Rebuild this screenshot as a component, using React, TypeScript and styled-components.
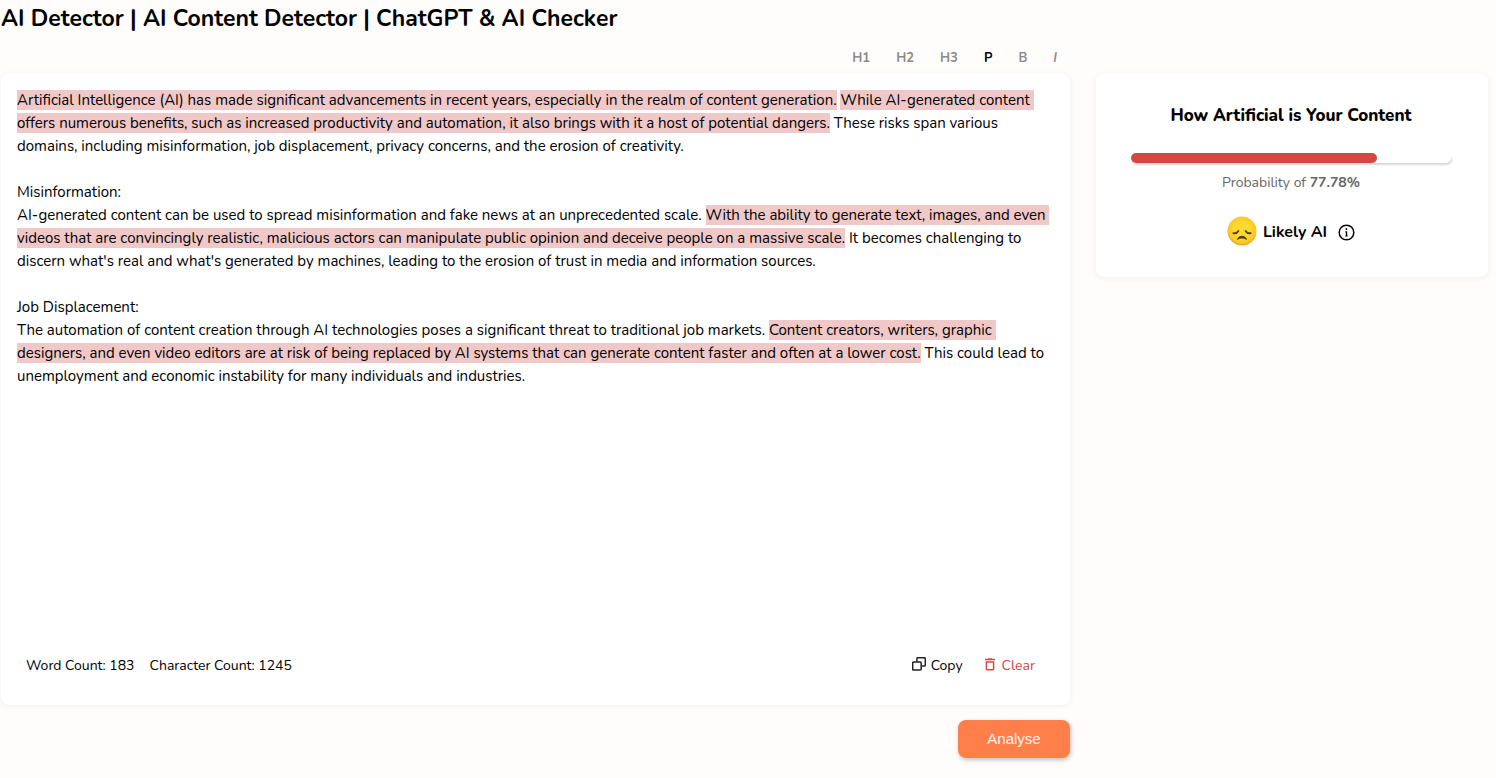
import React, { useState } from "react";
import styled, { createGlobalStyle } from "styled-components";

const GlobalStyle = createGlobalStyle`
  *, *::before, *::after { box-sizing: border-box; }
  body {
    margin: 0;
    background: #fefdfb;
    color: #000;
    font-family: Nunito, Lato, "Liberation Sans", sans-serif;
  }
  button { font: inherit; border: 0; background: none; padding: 0; cursor: pointer; }
`;

const Page = styled.div`
  padding: 0 8px 20px 1px;
`;

const Title = styled.h1`
  margin: 0;
  font-size: 23px;
  line-height: 38px;
  font-weight: 700;
`;

const Columns = styled.main`
  display: grid;
  grid-template-columns: minmax(0, 1fr) 392px;
  column-gap: 26px;
  align-items: start;
`;

const Toolbar = styled.div`
  display: flex;
  justify-content: flex-end;
  gap: 26px;
  height: 36px;
  padding: 9px 13px 0 0;
`;

const Format = styled.button<{ $active?: boolean; $italic?: boolean }>`
  height: 22px;
  font-size: 13px;
  line-height: 22px;
  font-weight: 700;
  font-style: ${(p) => (p.$italic ? "italic" : "normal")};
  color: ${(p) => (p.$active ? "#000" : "#8b8b8b")};
`;

const Card = styled.section`
  background: #fff;
  border-radius: 8px;
  box-shadow: 0 1px 6px rgba(0, 0, 0, 0.06);
`;

const EditorCard = styled(Card)`
  display: flex;
  flex-direction: column;
  padding: 15px 16px 19px;
`;

const Editor = styled.div`
  min-height: 556px;
  outline: none;
  font-size: 15px;
  line-height: 23px;
  white-space: pre-wrap;
`;

const Mark = styled.mark`
  background: #f1c8c8;
  color: inherit;
`;

const EditorFooter = styled.footer`
  display: flex;
  align-items: center;
  gap: 15px;
  height: 41px;
  padding: 0 19px 0 9px;
  font-size: 14px;
  line-height: 20px;
`;

const Actions = styled.div`
  display: flex;
  gap: 21px;
  margin-left: auto;
`;

const Action = styled.button<{ $danger?: boolean }>`
  display: flex;
  align-items: center;
  gap: ${(p) => (p.$danger ? 6 : 5)}px;
  color: ${(p) => (p.$danger ? "#d04a46" : "#000")};
`;

const SubmitRow = styled.div`
  display: flex;
  justify-content: flex-end;
  margin-top: 15px;
`;

const Submit = styled.button`
  width: 112px;
  height: 38px;
  padding-bottom: 2px;
  border-radius: 8px;
  background: #ff7f4a;
  box-shadow: 1px 2px 4px rgba(0, 0, 0, 0.25);
  color: #fff4ee;
  font-family: "Liberation Sans", sans-serif;
  font-size: 15px;
`;

const ResultCard = styled(Card)`
  display: flex;
  flex-direction: column;
  align-items: center;
  margin-top: 36px;
  padding: 28px 37px 29px 35px;
`;

const ResultTitle = styled.h2`
  margin: 0;
  font-size: 17px;
  line-height: 28px;
  font-weight: 800;
`;

const Track = styled.div`
  width: 100%;
  height: 10px;
  margin-top: 23px;
  border-radius: 5px;
  box-shadow: 1px 2px 2px rgba(0, 0, 0, 0.16);
`;

const Fill = styled.div`
  height: 100%;
  border-radius: 5px;
  background: #d04a43;
`;

const Probability = styled.p`
  margin: 10px 0 0;
  font-size: 14px;
  line-height: 20px;
  color: #666;
`;

const Verdict = styled.div`
  display: flex;
  align-items: center;
  height: 32px;
  margin-top: 23px;
  font-size: 16px;
  font-weight: 700;
`;

const VerdictText = styled.span`
  margin: 0 11px 0 6px;
`;

const InfoButton = styled.button`
  display: flex;
`;

type Segment = { text: string; flagged?: boolean };

const content: Segment[] = [
  { text: "Artificial Intelligence (AI) has made significant advancements in recent years, especially in the realm of content generation.", flagged: true },
  { text: " " },
  { text: "While AI-generated content offers numerous benefits, such as increased productivity and automation, it also brings with it a host of potential dangers.", flagged: true },
  { text: " These risks span various domains, including misinformation, job displacement, privacy concerns, and the erosion of creativity.\n\nMisinformation:\nAI-generated content can be used to spread misinformation and fake news at an unprecedented scale. " },
  { text: "With the ability to generate text, images, and even videos that are convincingly realistic, malicious actors can manipulate public opinion and deceive people on a massive scale.", flagged: true },
  { text: " It becomes challenging to discern what's real and what's generated by machines, leading to the erosion of trust in media and information sources.\n\nJob Displacement:\nThe automation of content creation through AI technologies poses a significant threat to traditional job markets. " },
  { text: "Content creators, writers, graphic designers, and even video editors are at risk of being replaced by AI systems that can generate content faster and often at a lower cost.", flagged: true },
  { text: " This could lead to unemployment and economic instability for many individuals and industries." },
];

const CopyIcon = () => (
  <svg width="14" height="17" viewBox="0 0 14 17" fill="none" stroke="#222" strokeWidth="1.5" aria-hidden="true">
    <path d="M4.9 4.9V1.7c0-.6.4-1 1-1h6.4c.6 0 1 .4 1 1v6.2c0 .6-.4 1-1 1H9.2" />
    <rect x="0.7" y="4.9" width="8.5" height="8.2" rx="1" />
  </svg>
);

const TrashIcon = () => (
  <svg width="12" height="18" viewBox="0 0 12 18" fill="none" stroke="#d04a46" strokeWidth="1.5" aria-hidden="true">
    <path d="M1 2.6h10M4 1.9h4" />
    <path d="M2.4 5h7.2v7c0 .4-.3.7-.7.7H3.1c-.4 0-.7-.3-.7-.7z" />
  </svg>
);

const InfoIcon = () => (
  <svg width="17" height="17" viewBox="0 0 17 17" fill="none" stroke="#000" aria-hidden="true">
    <circle cx="8.5" cy="8.5" r="7.3" strokeWidth="1.5" />
    <path d="M8.5 7.4v4.8" strokeWidth="1.4" />
    <path d="M7.2 7.8h1.3M7.2 12h2.6" strokeWidth="0.8" />
    <circle cx="8.4" cy="5" r="0.9" fill="#000" stroke="none" />
  </svg>
);

const SadFace = () => (
  <svg width="30" height="32" viewBox="0 0 30 32" fill="none" role="img" aria-label="Disappointed face">
    <defs>
      <radialGradient id="face" cx="50%" cy="45%" r="54%">
        <stop offset="0.5" stopColor="#fdd82f" />
        <stop offset="0.85" stopColor="#fbc926" />
        <stop offset="1" stopColor="#f0a01f" />
      </radialGradient>
    </defs>
    <circle cx="15" cy="15" r="14.5" fill="url(#face)" />
    <path d="M6.4 17.2c2 .3 4-.5 4.9-2.1M23.6 17.2c-2 .3-4-.5-4.9-2.1" stroke="#54400f" strokeWidth="1.9" strokeLinecap="round" />
    <path d="M10.6 23.3c.9-4 7.9-4 8.8 0-2.4-1.9-6.4-1.9-8.8 0z" fill="#4a380f" stroke="#4a380f" strokeWidth="1" strokeLinejoin="round" />
  </svg>
);

const formats = ["H1", "H2", "H3", "P", "B", "I"];
const probability = 77.78;

export default function App() {
  const [active, setActive] = useState("P");
  return (
    <>
      <GlobalStyle />
      <Page>
        <Title>AI Detector | AI Content Detector | ChatGPT &amp; AI Checker</Title>
        <Columns>
          <div>
            <Toolbar role="toolbar" aria-label="Text format">
              {formats.map((f) => (
                <Format key={f} $active={f === active} $italic={f === "I"} onClick={() => setActive(f)}>
                  {f}
                </Format>
              ))}
            </Toolbar>
            <EditorCard>
              <Editor role="textbox" aria-multiline="true" aria-label="Content" contentEditable suppressContentEditableWarning spellCheck={false}>
                {content.map((s, i) => (s.flagged ? <Mark key={i}>{s.text}</Mark> : <span key={i}>{s.text}</span>))}
              </Editor>
              <EditorFooter>
                <span>Word Count: 183</span>
                <span>Character Count: 1245</span>
                <Actions>
                  <Action><CopyIcon />Copy</Action>
                  <Action $danger><TrashIcon />Clear</Action>
                </Actions>
              </EditorFooter>
            </EditorCard>
            <SubmitRow>
              <Submit>Analyse</Submit>
            </SubmitRow>
          </div>
          <ResultCard>
            <ResultTitle>How Artificial is Your Content</ResultTitle>
            <Track role="progressbar" aria-label="Probability of AI" aria-valuenow={probability} aria-valuemin={0} aria-valuemax={100}>
              <Fill style={{ width: `${probability - 1}%` }} />
            </Track>
            <Probability>Probability of <b>{probability}%</b></Probability>
            <Verdict>
              <SadFace />
              <VerdictText>Likely AI</VerdictText>
              <InfoButton aria-label="About this result"><InfoIcon /></InfoButton>
            </Verdict>
          </ResultCard>
        </Columns>
      </Page>
    </>
  );
}
